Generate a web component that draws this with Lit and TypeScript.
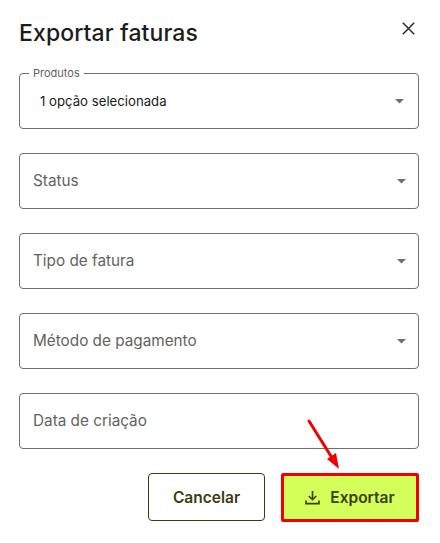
import { LitElement, html, css, nothing } from "lit";
import { customElement } from "lit/decorators.js";

const caret = html`<svg class="caret" width="9" height="5" viewBox="0 0 9 5"><path d="M0 0h9L4.5 4.6z" fill="#6f706a"/></svg>`;

@customElement("app-root")
export class AppRoot extends LitElement {
  static styles = css`
    :host {
      display: block;
      position: relative;
      width: 440px;
      height: 543px;
      background: #fff;
      font-family: Inter, "Noto Sans", sans-serif;
      overflow: hidden;
    }
    .dialog {
      display: flex;
      flex-direction: column;
      padding: 18px 21px 0 19px;
    }
    .head {
      display: flex;
      justify-content: space-between;
      align-items: flex-start;
      height: 55px;
    }
    h1 {
      margin: 0;
      font-size: 23px;
      line-height: 30px;
      font-weight: 500;
      color: #1c1c1a;
      letter-spacing: 0.1px;
    }
    .close {
      margin: 4px 4px 0 0;
      display: block;
    }
    .fields {
      display: flex;
      flex-direction: column;
      gap: 24px;
    }
    .field {
      position: relative;
      box-sizing: border-box;
      height: 56px;
      border: 1px solid #6f706a;
      border-radius: 4px;
      display: flex;
      align-items: center;
      justify-content: space-between;
      padding: 0 12px 0 13px;
      font-size: 15.3px;
      color: #62635d;
    }
    .field > span:not(.legend) {
      position: relative;
      top: -1px;
    }
    .field.filled {
      color: #1c1c1a;
      font-size: 13.2px;
      padding: 0 14px 0 20px;
    }
    .field.filled > span:not(.legend) {
      top: 0;
    }
    .legend {
      position: absolute;
      left: 9px;
      top: -7px;
      padding: 0 4px;
      background: #fff;
      font-size: 11px;
      line-height: 13px;
      color: #62635d;
    }
    .caret { display: block; }
    .actions {
      display: flex;
      justify-content: flex-end;
      gap: 16px;
      margin-top: 24px;
    }
    .btn {
      box-sizing: border-box;
      display: flex;
      align-items: center;
      justify-content: center;
      gap: 10px;
      font: inherit;
      font-size: 15.5px;
      font-weight: 600;
      color: #3a3d0c;
      border-radius: 4px;
      height: 48px;
    }
    .cancel {
      width: 117px;
      background: #fff;
      border: 1px solid #3a3d0c;
    }
    .export {
      width: 138px;
      height: 49px;
      background: #d4fe5a;
      border: 3px solid #f00000;
      border-radius: 2px;
    }
    .arrow {
      position: absolute;
      left: 300px;
      top: 412px;
      pointer-events: none;
    }
  `;

  private field(label: string, opts: { caret?: boolean } = {}) {
    return html`<div class="field">
      <span>${label}</span>
      ${opts.caret ? caret : nothing}
    </div>`;
  }

  render() {
    return html`
      <div class="dialog">
        <div class="head">
          <h1>Exportar faturas</h1>
          <svg class="close" width="13" height="13" viewBox="0 0 13 13">
            <path d="M.8.8l11.4 11.4M12.2.8L.8 12.2" stroke="#2a2a28" stroke-width="1.5" fill="none"/>
          </svg>
        </div>
        <div class="fields">
          <div class="field filled">
            <span class="legend">Produtos</span>
            <span>1 opção selecionada</span>
            ${caret}
          </div>
          ${this.field("Status", { caret: true })}
          ${this.field("Tipo de fatura", { caret: true })}
          ${this.field("Método de pagamento", { caret: true })}
          ${this.field("Data de criação")}
        </div>
        <div class="actions">
          <div class="btn cancel">Cancelar</div>
          <div class="btn export">
            <svg width="15" height="15" viewBox="0 0 15 15" fill="none" stroke="#3a3d0c" stroke-width="1.6">
              <path d="M7.5 1v8.5M3.8 6l3.7 3.7L11.2 6M1 10.5V13.6h13v-3.1"/>
            </svg>
            <span>Exportar</span>
          </div>
        </div>
      </div>
      <svg class="arrow" width="50" height="62" viewBox="0 0 50 62">
        <path d="M9 9L34 49" stroke="#f00000" stroke-width="3" stroke-linecap="round"/>
        <path d="M39 57L27 47L36 41z" fill="#f00000"/>
      </svg>
    `;
  }
}
